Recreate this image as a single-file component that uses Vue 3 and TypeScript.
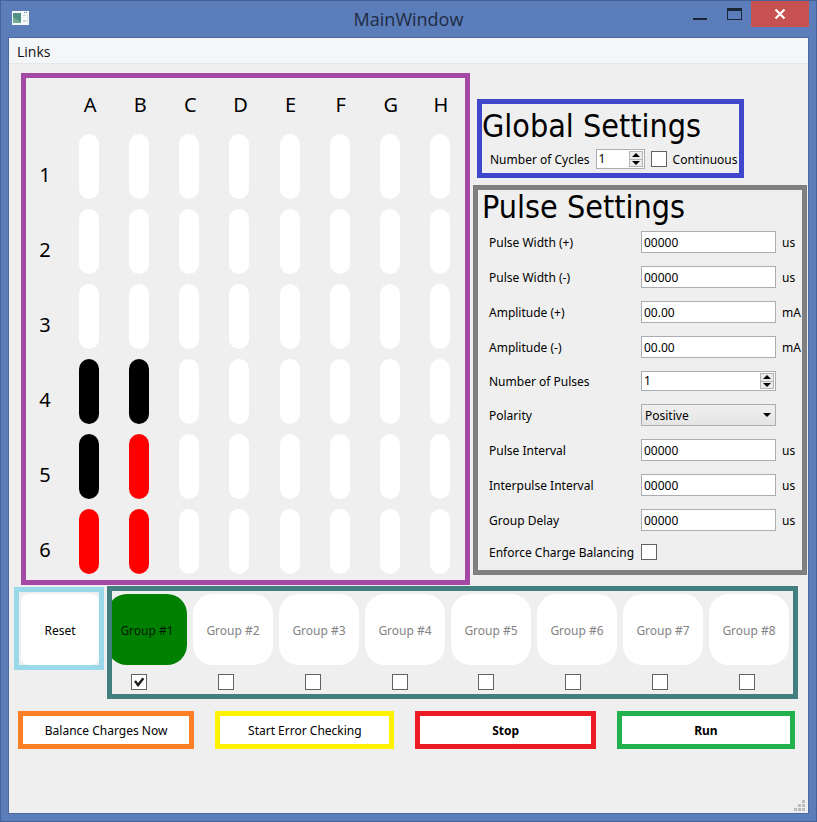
<script setup lang="ts">
import { reactive, ref } from 'vue'

type Pole = 'idle' | 'source' | 'sink'

interface Field {
  id: string
  label: string
  kind: 'text' | 'spin' | 'select' | 'check'
  value: string
  unit?: string
}

const columns = ['A', 'B', 'C', 'D', 'E', 'F', 'G', 'H']
const rows = [1, 2, 3, 4, 5, 6]

const poles = reactive<Record<string, Pole>>({
  A4: 'source',
  B4: 'source',
  A5: 'source',
  B5: 'sink',
  A6: 'sink',
  B6: 'sink',
})

const poleOf = (key: string): Pole => poles[key] ?? 'idle'

function cyclePole(key: string) {
  const order: Pole[] = ['idle', 'source', 'sink']
  poles[key] = order[(order.indexOf(poleOf(key)) + 1) % order.length]
}

const cycles = ref(1)
const continuous = ref(false)
const pulses = ref(1)
const polarity = ref('Positive')
const balancing = ref(false)

const fields = reactive<Field[]>([
  { id: 'width-pos', label: 'Pulse Width (+)', kind: 'text', value: '00000', unit: 'us' },
  { id: 'width-neg', label: 'Pulse Width (-)', kind: 'text', value: '00000', unit: 'us' },
  { id: 'amp-pos', label: 'Amplitude (+)', kind: 'text', value: '00.00', unit: 'mA' },
  { id: 'amp-neg', label: 'Amplitude (-)', kind: 'text', value: '00.00', unit: 'mA' },
  { id: 'pulses', label: 'Number of Pulses', kind: 'spin', value: '' },
  { id: 'polarity', label: 'Polarity', kind: 'select', value: '' },
  { id: 'interval', label: 'Pulse Interval', kind: 'text', value: '00000', unit: 'us' },
  { id: 'interpulse', label: 'Interpulse Interval', kind: 'text', value: '00000', unit: 'us' },
  { id: 'delay', label: 'Group Delay', kind: 'text', value: '00000', unit: 'us' },
  { id: 'balancing', label: 'Enforce Charge Balancing', kind: 'check', value: '' },
])

const groups = reactive(
  Array.from({ length: 8 }, (_, i) => ({ name: `Group #${i + 1}`, enabled: i === 0 })),
)

function reset() {
  Object.keys(poles).forEach((key) => (poles[key] = 'idle'))
}
</script>

<template>
  <div class="window">
    <header class="titlebar">
      <svg class="app-icon" width="18" height="15" viewBox="0 0 18 15" aria-hidden="true">
        <rect x="0" y="0" width="17" height="14" fill="#f6f9fa" />
        <rect x="1" y="2" width="8" height="10" fill="#4f9088" />
        <path d="M1 12V6l8 5v1z" fill="#74ab92" />
        <path d="M11 4h3v1h-3zM11 9h3v2h-3z" fill="#c9d4d6" />
        <path d="M12 1h1v1h-1zM14 1h1v1h-1z" fill="#5b7db9" />
        <path d="M15 3h1v9h-1z" fill="#dfe6ea" />
      </svg>
      <h1 class="title">MainWindow</h1>
      <div class="window-buttons">
        <button type="button" class="win-btn" aria-label="Minimize">
          <svg width="14" height="12" viewBox="0 0 14 12"><rect x="0" y="10" width="14" height="2" fill="#1b2538" /></svg>
        </button>
        <button type="button" class="win-btn" aria-label="Maximize">
          <svg width="15" height="12" viewBox="0 0 15 12">
            <rect x="0.5" y="0.5" width="14" height="11" fill="none" stroke="#1b2538" />
            <rect x="0" y="0" width="15" height="3" fill="#1b2538" />
          </svg>
        </button>
        <button type="button" class="win-btn close" aria-label="Close">
          <svg width="12" height="10" viewBox="0 0 12 10">
            <path d="M1.5 0.5l9 9M10.5 0.5l-9 9" stroke="#fff" stroke-width="2.2" />
          </svg>
        </button>
      </div>
    </header>

    <div class="client">
      <nav class="menubar"><a href="#links">Links</a></nav>

      <main class="content">
        <div class="upper">
          <section class="electrodes" aria-label="Electrodes">
            <span></span>
            <span v-for="c in columns" :key="c" class="col-head">{{ c }}</span>
            <template v-for="r in rows" :key="r">
              <span class="row-head">{{ r }}</span>
              <div v-for="c in columns" :key="c + r" class="cell">
                <button
                  type="button"
                  class="pill"
                  :class="poleOf(c + r)"
                  :aria-label="c + r"
                  @click="cyclePole(c + r)"
                ></button>
              </div>
            </template>
          </section>

          <div class="settings">
            <section class="global">
              <h2>Global Settings</h2>
              <div class="global-row">
                <label for="cycles">Number of Cycles</label>
                <span class="spin small">
                  <input id="cycles" v-model.number="cycles" type="number" min="1" />
                  <span class="steps">
                    <button type="button" aria-label="More cycles" @click="cycles++">
                      <svg width="8" height="4" viewBox="0 0 8 4"><path d="M0 4L4 0L8 4z" /></svg>
                    </button>
                    <button type="button" aria-label="Fewer cycles" @click="cycles = Math.max(1, cycles - 1)">
                      <svg width="8" height="4" viewBox="0 0 8 4"><path d="M0 0L4 4L8 0z" /></svg>
                    </button>
                  </span>
                </span>
                <input id="continuous" v-model="continuous" class="box" type="checkbox" />
                <label for="continuous">Continuous</label>
              </div>
            </section>

            <section class="pulse">
              <h2>Pulse Settings</h2>
              <div class="fields">
                <template v-for="f in fields" :key="f.id">
                  <label :for="f.id">{{ f.label }}</label>
                  <input v-if="f.kind === 'text'" :id="f.id" v-model="f.value" class="line" type="text" />
                  <span v-else-if="f.kind === 'spin'" class="spin">
                    <input :id="f.id" v-model.number="pulses" type="number" min="1" />
                    <span class="steps">
                      <button type="button" aria-label="More pulses" @click="pulses++">
                        <svg width="8" height="4" viewBox="0 0 8 4"><path d="M0 4L4 0L8 4z" /></svg>
                      </button>
                      <button type="button" aria-label="Fewer pulses" @click="pulses = Math.max(1, pulses - 1)">
                        <svg width="8" height="4" viewBox="0 0 8 4"><path d="M0 0L4 4L8 0z" /></svg>
                      </button>
                    </span>
                  </span>
                  <span v-else-if="f.kind === 'select'" class="combo">
                    <select :id="f.id" v-model="polarity">
                      <option>Positive</option>
                      <option>Negative</option>
                    </select>
                    <svg width="8" height="4" viewBox="0 0 8 4"><path d="M0 0L4 4L8 0z" /></svg>
                  </span>
                  <input v-else :id="f.id" v-model="balancing" class="box" type="checkbox" />
                  <span class="unit">{{ f.unit }}</span>
                </template>
              </div>
            </section>
          </div>
        </div>

        <div class="middle">
          <div class="reset-frame">
            <button type="button" class="reset" @click="reset">Reset</button>
          </div>
          <section class="groups" aria-label="Groups">
            <div class="group-buttons">
              <button
                v-for="g in groups"
                :key="g.name"
                type="button"
                class="group"
                :class="{ active: g.enabled }"
              >
                {{ g.name }}
              </button>
            </div>
            <div class="group-checks">
              <span v-for="g in groups" :key="g.name" class="tick">
                <input v-model="g.enabled" class="box" type="checkbox" :aria-label="g.name" />
                <svg v-if="g.enabled" width="16" height="16" viewBox="0 0 16 16">
                  <path d="M3 7.5L5 6.3L7 9L11.5 3.5L13.3 5L7.5 12.5L6.5 12.5z" fill="#1c1c1c" />
                </svg>
              </span>
            </div>
          </section>
        </div>

        <div class="actions">
          <button type="button" class="balance">Balance Charges Now</button>
          <button type="button" class="check-errors">Start Error Checking</button>
          <button type="button" class="stop">Stop</button>
          <button type="button" class="run">Run</button>
        </div>
      </main>

      <svg class="grip" width="11" height="11" viewBox="0 0 11 11" aria-hidden="true">
        <path d="M8 0h3v3H8zM4 4h3v3H4zM8 4h3v3H8zM0 8h3v3H0zM4 8h3v3H4zM8 8h3v3H8z" fill="#bdbdbd" />
      </svg>
    </div>
  </div>
</template>

<style>
body {
  margin: 0;
}
</style>

<style scoped>
* {
  box-sizing: border-box;
}

.window {
  display: flex;
  flex-direction: column;
  min-height: 100vh;
  padding: 0 7px 7px;
  border: 1px solid #45629b;
  background: #5b7db9;
  color: #000;
  font-family: 'Noto Sans', sans-serif;
  font-size: 12px;
  line-height: 16px;
}

button,
input,
select {
  margin: 0;
  font: inherit;
  color: inherit;
}

.titlebar {
  display: grid;
  grid-template-columns: 1fr auto 1fr;
  align-items: start;
  height: 36px;
}

.app-icon {
  margin: 10px 0 0 4px;
}

.title {
  margin: 6px 0 0;
  font: 400 18px/24px 'Open Sans', 'Noto Sans', sans-serif;
  color: #1f2b45;
}

.window-buttons {
  display: flex;
  justify-content: flex-end;
}

.win-btn {
  display: flex;
  align-items: center;
  justify-content: center;
  width: 34px;
  height: 26px;
  padding: 0;
  border: 0;
  background: none;
}

.close {
  width: 58px;
  background: #c75050;
}

.client {
  display: flex;
  flex: 1;
  flex-direction: column;
  border: 1px solid #4a689f;
  background: #efefef;
}

.menubar {
  height: 26px;
  padding: 1px 8px 0;
  border-bottom: 1px solid #e6e7e8;
  background: #f5f6f8;
  font: 14px/26px 'Open Sans', sans-serif;
}

.menubar a {
  color: #111;
  text-decoration: none;
}

.content {
  flex: 1;
  padding: 9px 1px 0 5px;
}

.upper {
  display: grid;
  grid-template-columns: minmax(0, 449fr) minmax(0, 334fr);
  gap: 3px;
  padding-left: 7px;
}

.electrodes {
  display: grid;
  grid-template-columns: 38px repeat(8, 1fr);
  grid-template-rows: 51px repeat(6, 75px);
  padding-bottom: 1px;
  border: 5px solid #a349a4;
  font-size: 20px;
  line-height: 24px;
}

.col-head {
  padding: 15px 0 0 2px;
  text-align: center;
}

.row-head {
  padding-top: 34px;
  text-align: center;
}

.cell {
  display: flex;
  align-items: center;
  justify-content: center;
}

.pill {
  width: 20px;
  height: 65px;
  padding: 0;
  border: 0;
  border-radius: 10px;
  background: #fff;
}

.pill.source {
  background: #000;
}

.pill.sink {
  background: #f00;
}

.settings {
  padding-top: 26px;
}

h2 {
  margin: 0;
  font-family: 'DejaVu Sans Condensed', 'DejaVu Sans', sans-serif;
  font-size: 32px;
  font-weight: 400;
  line-height: 40px;
  white-space: nowrap;
}

.global {
  height: 79px;
  margin: 0 63px 7px 4px;
  border: 5px solid #3f48cc;
}

.global h2 {
  padding-top: 2px;
}

.global-row {
  display: flex;
  align-items: center;
  gap: 6px;
  padding: 3px 0 0 8px;
  white-space: nowrap;
}

.pulse {
  height: 390px;
  border: 5px solid #7f7f7f;
}

.pulse h2 {
  height: 41px;
  padding-left: 4px;
  line-height: 34px;
}

.fields {
  display: grid;
  grid-template-columns: 146px minmax(0, 1fr) 20px;
  gap: 13px 6px;
  align-items: center;
  padding-left: 11px;
  white-space: nowrap;
}

label,
.unit {
  padding-top: 2px;
  line-height: 14px;
}

.line,
.spin,
.combo select {
  width: 100%;
  height: 22px;
  border: 1px solid #abadb3;
  border-radius: 0;
  background: #fff;
}

.line {
  padding: 0 2px;
}

.spin {
  display: flex;
  height: 20px;
  padding: 1px;
}

.spin.small {
  width: 49px;
}

.spin input {
  flex: 1;
  min-width: 0;
  padding: 0 1px;
  border: 0;
  background: none;
  appearance: textfield;
}

.spin input::-webkit-inner-spin-button {
  appearance: none;
}

.steps {
  display: flex;
  flex-direction: column;
  width: 14px;
}

.steps button {
  display: flex;
  flex: 1;
  align-items: center;
  justify-content: center;
  min-height: 0;
  padding: 0;
  border: 1px solid #b4b4b4;
  background: #ececec;
}

.steps button + button {
  border-top: 0;
}

.combo {
  position: relative;
  display: block;
}

.combo select {
  display: block;
  padding: 1px 3px 0;
  background: linear-gradient(#f0f0f0, #e4e4e4);
  appearance: none;
}

.combo svg {
  position: absolute;
  top: 9px;
  right: 5px;
  pointer-events: none;
}

.box {
  display: block;
  flex: none;
  width: 16px;
  height: 16px;
  border: 1px solid #626262;
  background: #fff;
  appearance: none;
}

.middle {
  display: flex;
  align-items: flex-start;
  gap: 3px;
  padding: 1px 9px 0 0;
}

.reset-frame {
  flex: none;
  width: 90px;
  height: 83px;
  margin-top: 1px;
  padding: 2px 0 0 2px;
  border: 5px solid #99d9ea;
}

.reset {
  width: 100%;
  height: 71px;
  padding: 2px 0 0;
  border: 0;
  border-radius: 8px;
  background: #fff;
}

.groups {
  flex: 1;
  height: 113px;
  overflow: hidden;
  border: 5px solid #437f7f;
}

.group-buttons {
  display: grid;
  grid-template-columns: repeat(8, 1fr);
  gap: 6px;
  margin: 3px 4px 9px -5px;
}

.group {
  height: 71px;
  padding: 2px 0 0;
  border: 0;
  border-radius: 20px;
  background: #fff;
  color: #838383;
}

.group.active {
  background: #008000;
  color: #001a00;
}

.group-checks {
  display: flex;
  justify-content: space-between;
  padding: 0 38px 0 19px;
}

.tick {
  position: relative;
}

.tick svg {
  position: absolute;
  inset: 0;
  pointer-events: none;
}

.actions {
  display: grid;
  grid-template-columns: 176fr 179fr 180fr 178fr;
  gap: 21px;
  padding: 12px 12px 0 4px;
}

.actions button {
  height: 38px;
  padding: 2px 0 0;
  border: 5px solid;
  background: #fff;
}

.actions .balance {
  border-color: #ff7f27;
}

.actions .check-errors {
  border-color: #fff200;
}

.actions .stop {
  border-color: #ed1c24;
  font-weight: 700;
}

.actions .run {
  border-color: #22b14c;
  font-weight: 700;
}

.grip {
  align-self: flex-end;
  margin: 0 3px 2px 0;
}
</style>
